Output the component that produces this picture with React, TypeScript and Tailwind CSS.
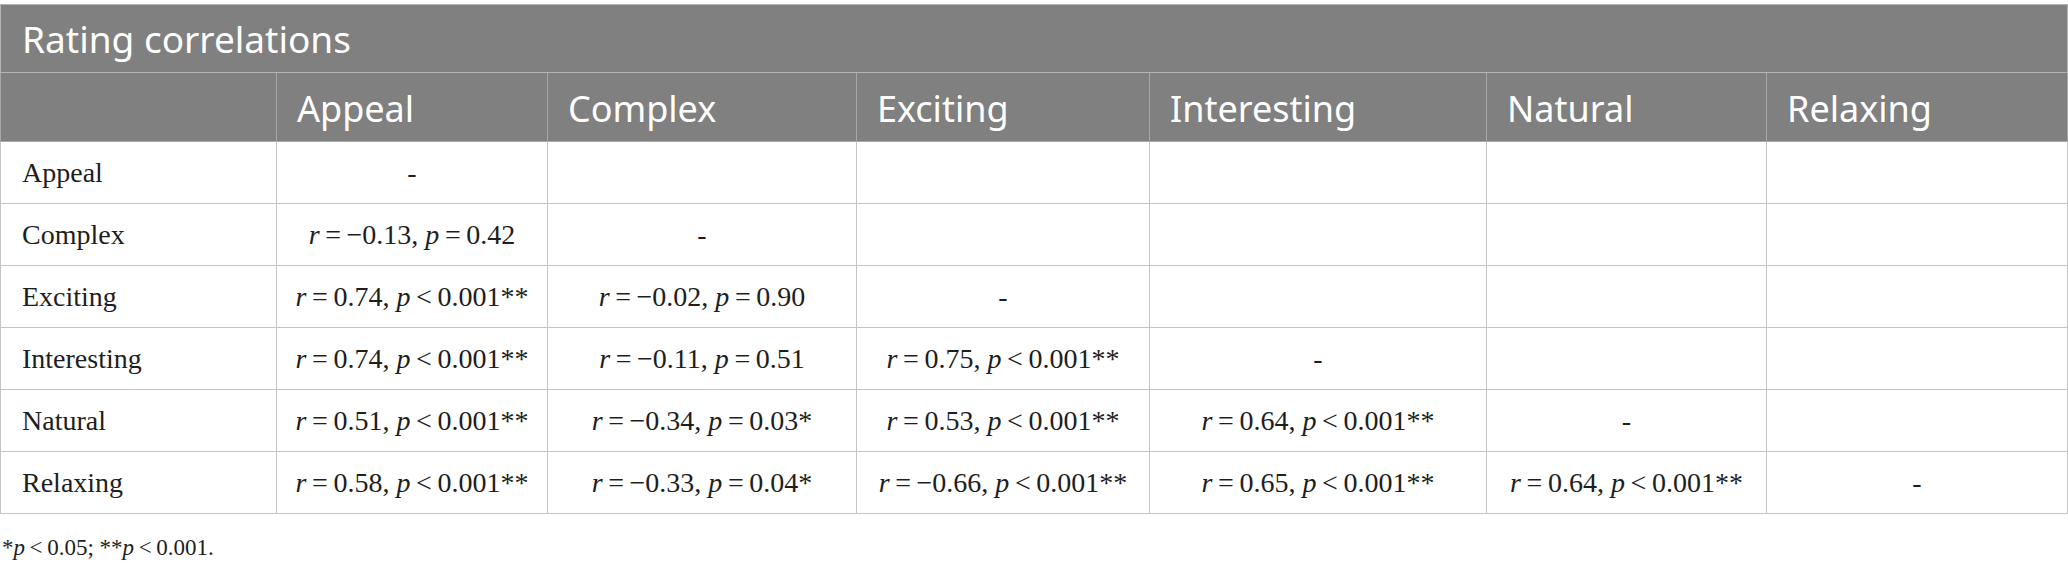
const columns = ["Appeal", "Complex", "Exciting", "Interesting", "Natural", "Relaxing"];

const colWidths = ["w-[276px]", "w-[271px]", "w-[309px]", "w-[293px]", "w-[337px]", "w-[280px]", "w-[301px]"];

type Stat = { r: string; op: "=" | "<"; p: string; stars: string } | "-" | null;

const rows: { label: string; cells: Stat[] }[] = [
  { label: "Appeal", cells: ["-", null, null, null, null, null] },
  { label: "Complex", cells: [{ r: "\u22120.13", op: "=", p: "0.42", stars: "" }, "-", null, null, null, null] },
  {
    label: "Exciting",
    cells: [
      { r: "0.74", op: "<", p: "0.001", stars: "**" },
      { r: "\u22120.02", op: "=", p: "0.90", stars: "" },
      "-",
      null,
      null,
      null,
    ],
  },
  {
    label: "Interesting",
    cells: [
      { r: "0.74", op: "<", p: "0.001", stars: "**" },
      { r: "\u22120.11", op: "=", p: "0.51", stars: "" },
      { r: "0.75", op: "<", p: "0.001", stars: "**" },
      "-",
      null,
      null,
    ],
  },
  {
    label: "Natural",
    cells: [
      { r: "0.51", op: "<", p: "0.001", stars: "**" },
      { r: "\u22120.34", op: "=", p: "0.03", stars: "*" },
      { r: "0.53", op: "<", p: "0.001", stars: "**" },
      { r: "0.64", op: "<", p: "0.001", stars: "**" },
      "-",
      null,
    ],
  },
  {
    label: "Relaxing",
    cells: [
      { r: "0.58", op: "<", p: "0.001", stars: "**" },
      { r: "\u22120.33", op: "=", p: "0.04", stars: "*" },
      { r: "\u22120.66", op: "<", p: "0.001", stars: "**" },
      { r: "0.65", op: "<", p: "0.001", stars: "**" },
      { r: "0.64", op: "<", p: "0.001", stars: "**" },
      "-",
    ],
  },
];

const thin = "\u2009";

function StatText({ s }: { s: Stat }) {
  if (s === null) return null;
  if (s === "-") return <>-</>;
  return (
    <>
      <i>r</i>
      {thin}={thin}
      {s.r}, <i>p</i>
      {thin}
      {s.op}
      {thin}
      {s.p}
      {s.stars}
    </>
  );
}

export default function App() {
  return (
    <div className="w-[2068px] h-[567px] bg-white pt-[4px]">
      <table className="w-[2067px] table-fixed border-collapse">
        <colgroup>
          {colWidths.map((w, i) => (
            <col key={i} className={w} />
          ))}
        </colgroup>
        <thead>
          <tr className="h-[68px] bg-[#7f807f]">
            <th
              colSpan={7}
              className="border border-[#b4b4b4] px-[21px] text-left align-middle font-normal text-white text-[37px] leading-none font-['Noto_Sans',sans-serif]"
            >
              Rating correlations
            </th>
          </tr>
          <tr className="h-[69px] bg-[#7f807f]">
            <th className="border border-[#a8a8a8]" />
            {columns.map((c) => (
              <th
                key={c}
                className="border border-[#a8a8a8] px-[20px] pt-[3px] text-left align-middle font-normal text-white text-[36px] leading-none font-['Noto_Sans',sans-serif]"
              >
                {c}
              </th>
            ))}
          </tr>
        </thead>
        <tbody className="font-['Liberation_Serif',serif] text-[28px] text-[#1e1e1e]">
          {rows.map((row) => (
            <tr key={row.label} className="h-[62px]">
              <td className="border border-[#c4c4c4] px-[21px] text-left align-middle whitespace-nowrap">
                {row.label}
              </td>
              {row.cells.map((cell, i) => (
                <td
                  key={i}
                  className="border border-[#c4c4c4] px-2 text-center align-middle whitespace-nowrap"
                >
                  <StatText s={cell} />
                </td>
              ))}
            </tr>
          ))}
        </tbody>
      </table>
      <p className="pt-[19px] pl-[2px] font-['Liberation_Serif',serif] text-[23px] leading-[30px] text-[#1e1e1e]">
        *<i>p</i>
        {thin}&lt;{thin}0.05; **<i>p</i>
        {thin}&lt;{thin}0.001.
      </p>
    </div>
  );
}
